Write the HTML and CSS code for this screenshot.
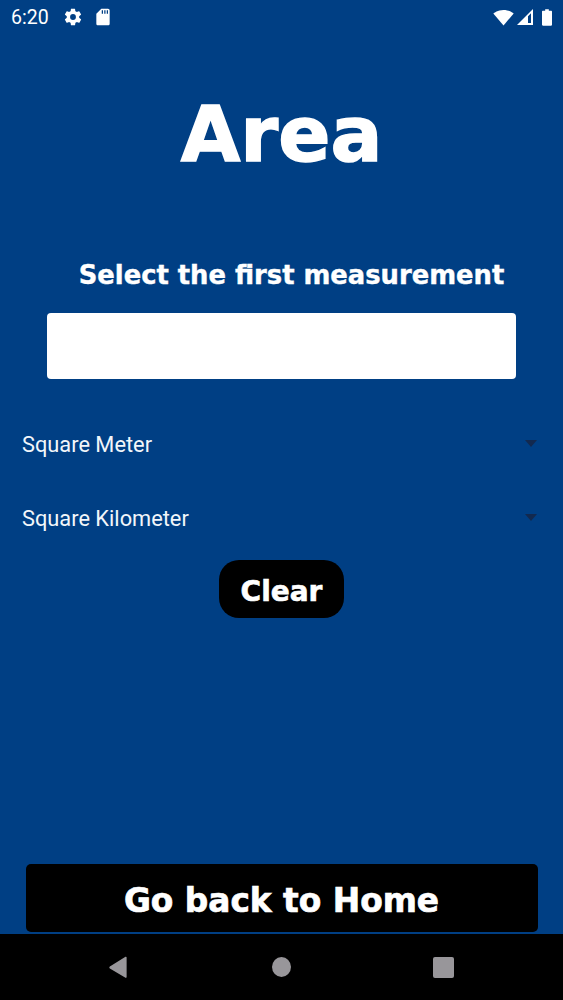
FILE: index.html
```html
<!DOCTYPE html>
<html lang="en">
<head>
  <meta charset="UTF-8">
  <meta name="viewport" content="width=device-width, initial-scale=1.0">
  <title>Area</title>
  <link rel="stylesheet" href="styles.css">
</head>
<body>
  <div class="screen">
    <div class="status-bar">
      <div class="status-left">
        <span class="time">6:20</span>
        <svg class="icon gear" viewBox="0 0 24 24"><path fill="#fff" d="M19.4 13c.04-.32.07-.65.07-1s-.03-.68-.07-1l2.1-1.65c.2-.15.25-.42.12-.64l-2-3.46c-.12-.22-.38-.3-.6-.22l-2.5 1c-.52-.4-1.08-.73-1.7-.98l-.37-2.65A.49.49 0 0 0 14 2h-4c-.25 0-.46.18-.5.42l-.37 2.65c-.62.25-1.18.58-1.7.98l-2.5-1c-.22-.08-.48 0-.6.22l-2 3.46c-.13.22-.08.49.12.64L4.55 11c-.04.32-.07.66-.07 1s.03.68.07 1l-2.1 1.65c-.2.15-.25.42-.12.64l2 3.46c.12.22.38.3.6.22l2.5-1c.52.4 1.08.73 1.7.98l.37 2.65c.04.24.25.42.5.42h4c.25 0 .46-.18.5-.42l.37-2.65c.62-.25 1.18-.58 1.7-.98l2.5 1c.22.08.48 0 .6-.22l2-3.46c.13-.22.08-.49-.12-.64L19.4 13zM12 15.500a3.500 3.500 0 1 1 0-7 3.500 3.500 0 0 1 0 7z"/></svg>
        <svg class="icon sd" viewBox="0 0 24 24"><path fill="#fff" d="M18 2h-8L4 8v12c0 1.100.9 2 2 2h12c1.100 0 2-.9 2-2V4c0-1.100-.9-2-2-2zm-6 6h-1.500V4H12v4zm3 0h-1.500V4H15v4zm3 0h-1.500V4H18v4z"/></svg>
      </div>
      <div class="status-right">
        <svg class="icon wifi" viewBox="0 0 20 16"><path fill="#fff" d="M10 15.500 .3 4.300C1 3.700 4.500 .8 10 .8s9 2.900 9.700 3.500L10 15.500z"/></svg>
        <svg class="icon signal" viewBox="0 0 18 18"><path fill="#fff" d="M17 1 1 17h16V1zm-2 4.200V15h-3V8.200l3-3z"/></svg>
        <svg class="icon battery" viewBox="0 0 11 18"><path fill="#fff" d="M3.500 0h4v1.500H10c.5 0 1 .4 1 1V17c0 .6-.5 1-1 1H1c-.5 0-1-.4-1-1V2.500c0-.6.5-1 1-1h2.500V0z"/></svg>
      </div>
    </div>

    <div class="content">
      <h1 class="title">Area</h1>
      <h2 class="prompt">Select the first measurement</h2>
      <input class="value-input" type="text">

      <div class="spinner">
        <span>Square Meter</span>
        <span class="arrow"></span>
      </div>
      <div class="spinner">
        <span>Square Kilometer</span>
        <span class="arrow"></span>
      </div>

      <button type="button" class="btn-clear">Clear</button>
      <button type="button" class="btn-home">Go back to Home</button>
    </div>

    <div class="nav-bar">
      <svg class="nav-icon" viewBox="0 0 20 24"><path fill="#98969a" d="M19 1.500V22c0 .8-.6 1-1.200.7L1.500 13c-.7-.4-.7-1.500 0-2L17.800.9c.6-.3 1.200 0 1.200.6z"/></svg>
      <span class="nav-circle"></span>
      <span class="nav-square"></span>
    </div>
  </div>
</body>
</html>
```

FILE: styles.css
```css
* {
  box-sizing: border-box;
}
body {
  margin: 0;
  font-family: Roboto, sans-serif;
  background: #003f84;
}
.screen {
  width: 563px;
  height: 1000px;
  display: flex;
  flex-direction: column;
  background: #003f84;
  overflow: hidden;
}
.status-bar {
  height: 34px;
  padding: 0 11px;
  display: flex;
  justify-content: space-between;
  align-items: center;
  color: #fff;
}
.status-left,
.status-right {
  display: flex;
  align-items: center;
}
.time {
  font-size: 19.500px;
  margin-right: 14px;
}
.icon {
  display: block;
}
.gear {
  width: 20px;
  height: 20px;
  margin-right: 10px;
}
.sd {
  width: 20px;
  height: 20px;
}
.wifi {
  width: 21px;
  height: 17px;
  margin-right: 2px;
}
.signal {
  width: 18px;
  height: 18px;
  margin-right: 8px;
}
.battery {
  width: 10px;
  height: 17px;
}
.content {
  flex: 1;
  display: flex;
  flex-direction: column;
  align-items: center;
  padding: 0 26px 2px;
}
.title {
  margin: 51px 0 0;
  font-family: "DejaVu Sans", sans-serif;
  font-size: 77px;
  font-weight: 700;
  line-height: 100px;
  color: #fff;
  -webkit-text-stroke: 1.500px #fff;
}
.prompt {
  margin: 74px 0 0 20px;
  font-family: "DejaVu Sans", sans-serif;
  font-size: 25.800px;
  font-weight: 700;
  line-height: 32px;
  white-space: nowrap;
  color: #fff;
  -webkit-text-stroke: 0.400px #fff;
}
.value-input {
  width: 469px;
  height: 66px;
  margin-top: 22px;
  background: #fff;
  border: none;
  border-radius: 4px;
}
.spinner {
  width: 563px;
  height: 48px;
  padding: 0 26px 0 22px;
  display: flex;
  justify-content: space-between;
  align-items: center;
  font-size: 21.800px;
  color: #f2f6fa;
}
.value-input + .spinner {
  margin-top: 41px;
}
.spinner + .spinner {
  margin-top: 26px;
}
.arrow {
  width: 0;
  height: 0;
  margin-bottom: 2px;
  border-left: 6.500px solid transparent;
  border-right: 6.500px solid transparent;
  border-top: 7px solid #12294f;
}
.btn-clear {
  width: 125px;
  height: 58px;
  margin-top: 18px;
  padding: 4px 0 0;
  background: #000;
  color: #fff;
  border: none;
  border-radius: 20px;
  font-family: "DejaVu Sans", sans-serif;
  font-size: 28px;
  font-weight: 700;
  -webkit-text-stroke: 0.600px #fff;
}
.btn-home {
  width: 512px;
  height: 68px;
  margin-top: auto;
  padding: 6px 0 0;
  background: #000;
  color: #fff;
  border: none;
  border-radius: 5px;
  font-family: "DejaVu Sans", sans-serif;
  font-size: 32.800px;
  font-weight: 700;
  -webkit-text-stroke: 0.700px #fff;
}
.nav-bar {
  height: 66px;
  padding: 0 109px 0 108px;
  display: flex;
  justify-content: space-between;
  align-items: center;
  background: #000;
}
.nav-icon {
  width: 20px;
  height: 23px;
}
.nav-circle {
  width: 19px;
  height: 20px;
  margin-left: 2px;
  border-radius: 50%;
  background: #98969a;
}
.nav-square {
  width: 21px;
  height: 21px;
  border-radius: 2px;
  background: #98969a;
}
```
